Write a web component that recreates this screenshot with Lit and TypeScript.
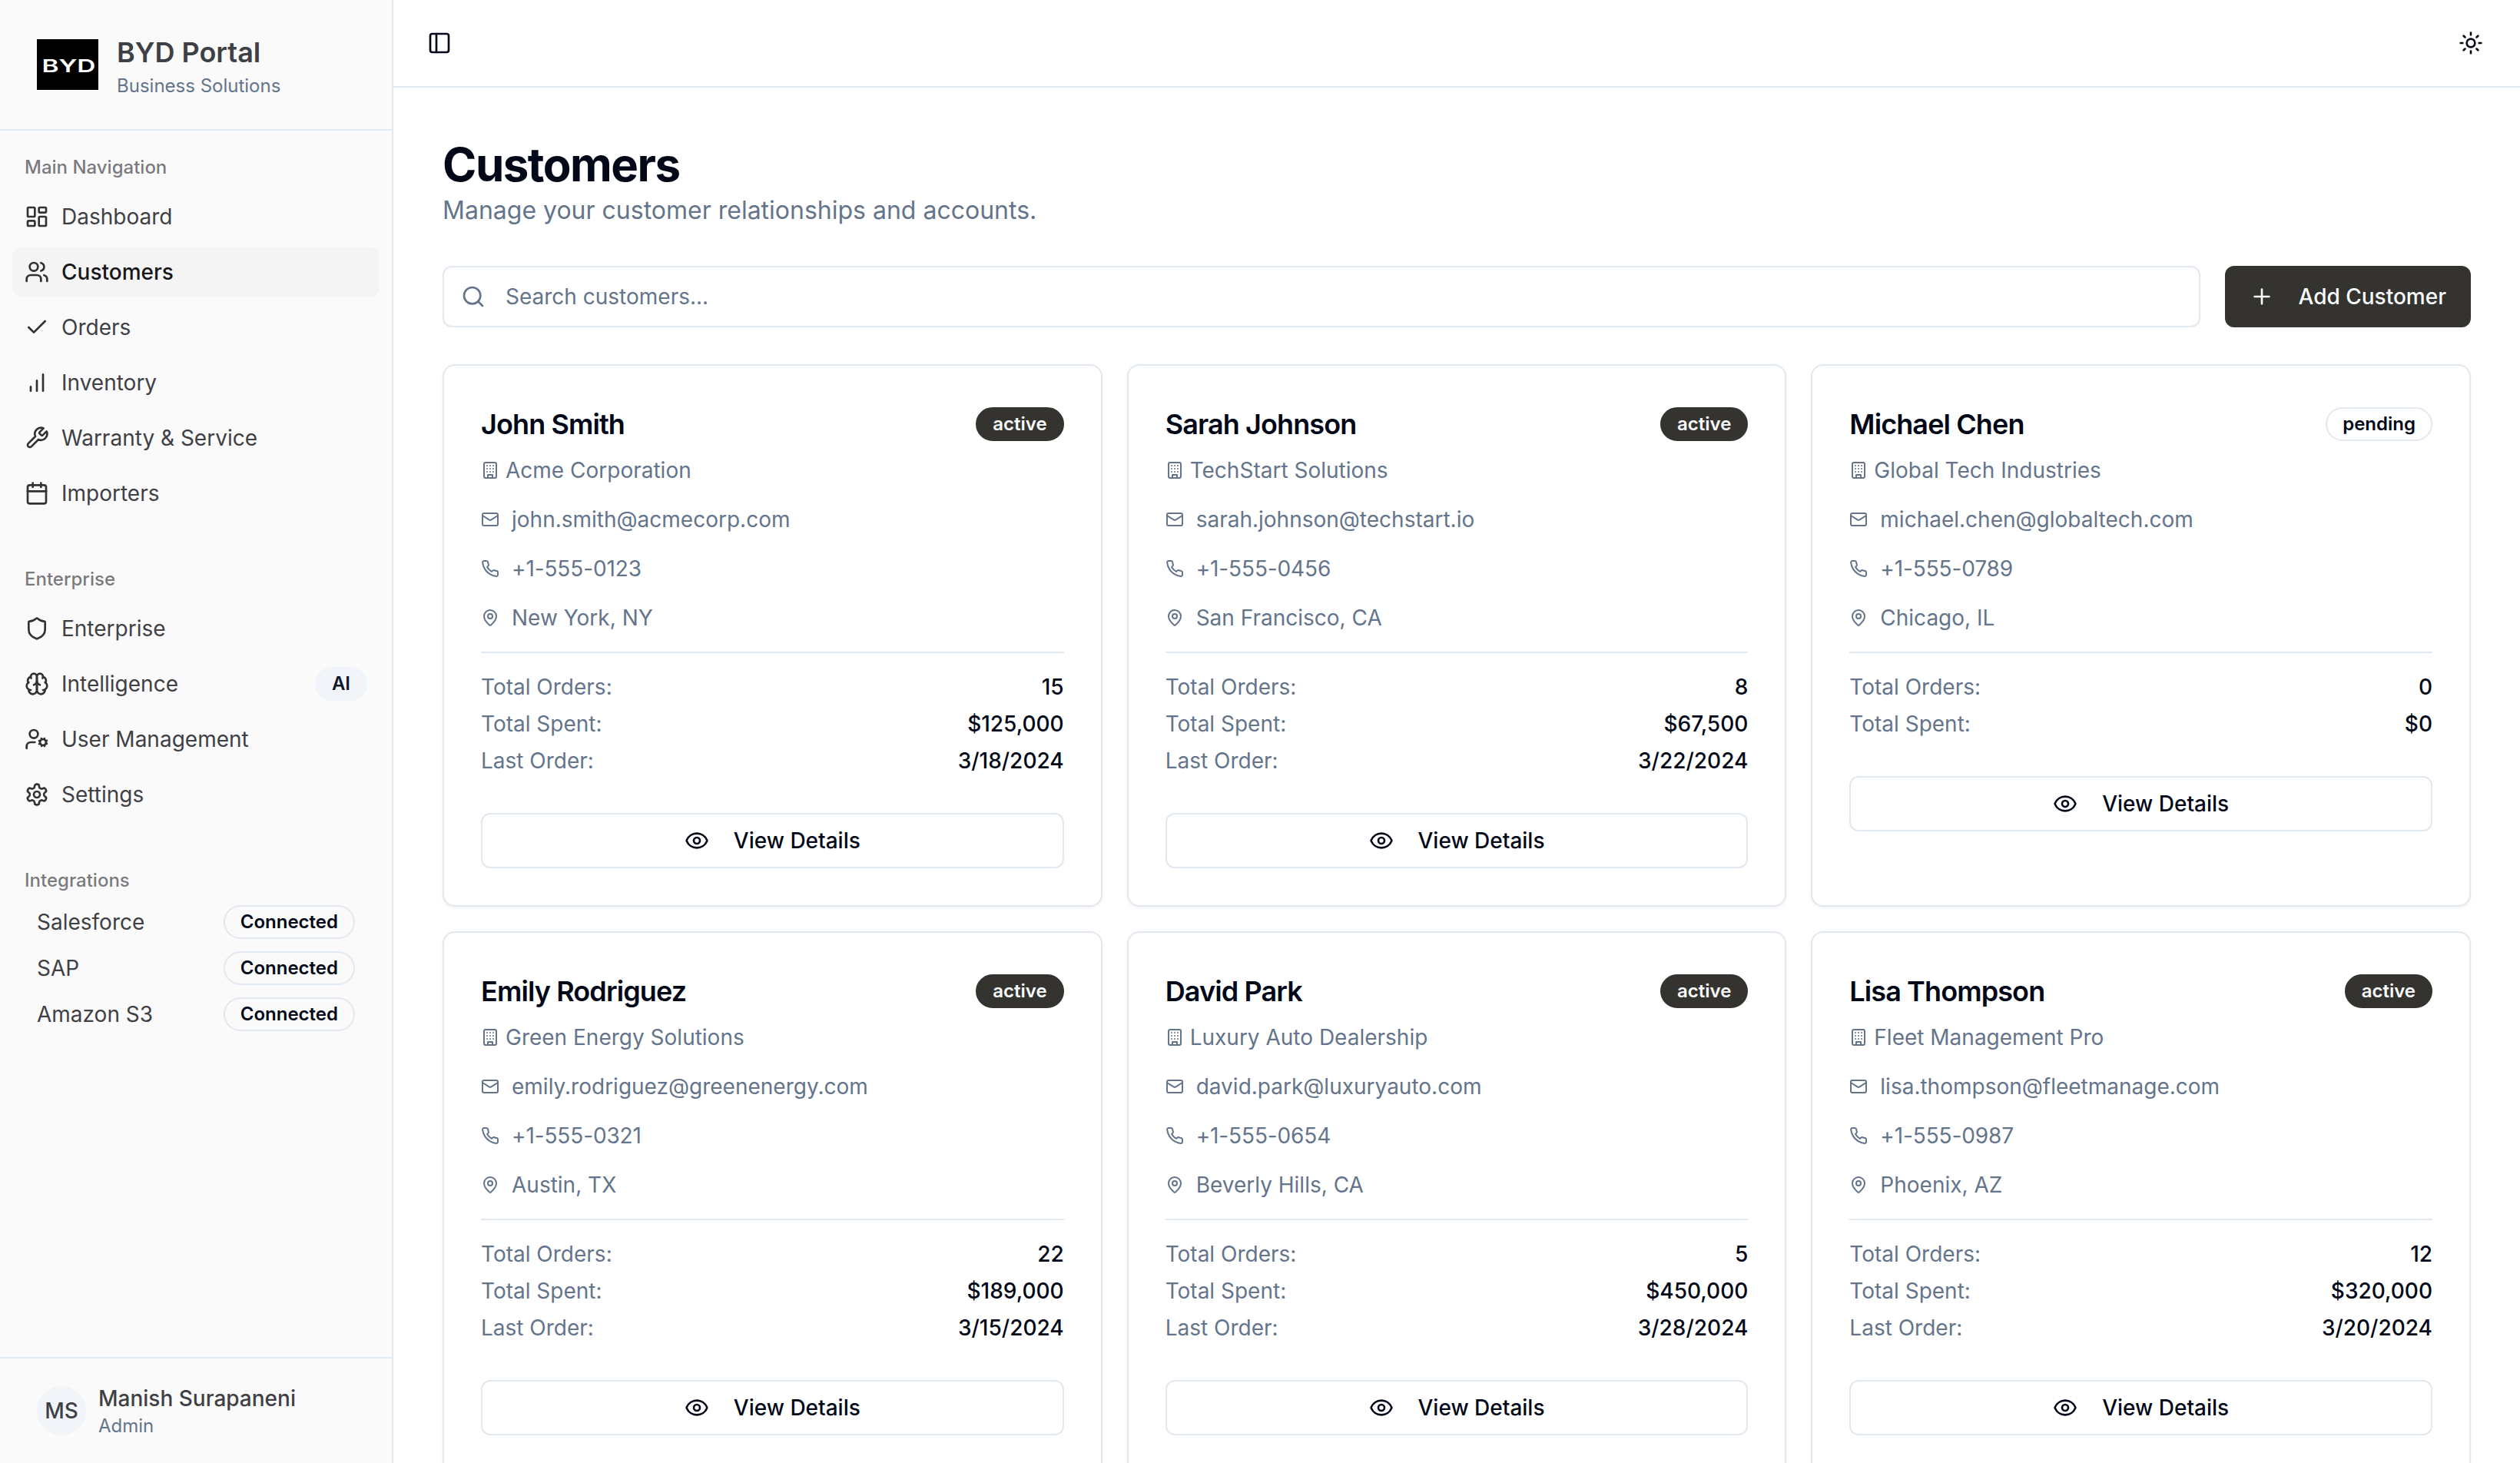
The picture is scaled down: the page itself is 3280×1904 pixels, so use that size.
import { LitElement, html, css, svg, nothing, type SVGTemplateResult } from "lit";
import { customElement, property } from "lit/decorators.js";

const ICONS: Record<string, SVGTemplateResult> = {
  dashboard: svg`<rect width="7" height="9" x="3" y="3" rx="1"/><rect width="7" height="5" x="14" y="3" rx="1"/><rect width="7" height="9" x="14" y="12" rx="1"/><rect width="7" height="5" x="3" y="16" rx="1"/>`,
  users: svg`<path d="M16 21v-2a4 4 0 0 0-4-4H6a4 4 0 0 0-4 4v2"/><circle cx="9" cy="7" r="4"/><path d="M22 21v-2a4 4 0 0 0-3-3.87"/><path d="M16 3.13a4 4 0 0 1 0 7.75"/>`,
  check: svg`<path d="M20 6 9 17l-5-5"/>`,
  chart: svg`<path d="M12 20V10M18 20V4M6 20v-4"/>`,
  wrench: svg`<path d="M14.7 6.3a1 1 0 0 0 0 1.4l1.6 1.6a1 1 0 0 0 1.4 0l3.77-3.77a6 6 0 0 1-7.94 7.94l-6.91 6.91a2.12 2.12 0 0 1-3-3l6.91-6.91a6 6 0 0 1 7.94-7.94l-3.76 3.76z"/>`,
  calendar: svg`<path d="M8 2v4M16 2v4"/><rect width="18" height="18" x="3" y="4" rx="2"/><path d="M3 10h18"/>`,
  shield: svg`<path d="M20 13c0 5-3.5 7.5-7.66 8.95a1 1 0 0 1-.67-.01C7.5 20.5 4 18 4 13V6a1 1 0 0 1 1-1c2 0 4.5-1.2 6.24-2.72a1.17 1.17 0 0 1 1.52 0C14.51 3.81 17 5 19 5a1 1 0 0 1 1 1z"/>`,
  brain: svg`<path d="M12 5a3 3 0 1 0-5.997.125 4 4 0 0 0-2.526 5.77 4 4 0 0 0 .556 6.588A4 4 0 1 0 12 18Z"/><path d="M12 5a3 3 0 1 1 5.997.125 4 4 0 0 1 2.526 5.77 4 4 0 0 1-.556 6.588A4 4 0 1 1 12 18Z"/><path d="M15 13a4.5 4.5 0 0 1-3-4 4.5 4.5 0 0 1-3 4"/><path d="M17.599 6.5a3 3 0 0 0 .399-1.375"/><path d="M6.003 5.125A3 3 0 0 0 6.401 6.5"/><path d="M3.477 10.896a4 4 0 0 1 .585-.396"/><path d="M19.938 10.5a4 4 0 0 1 .585.396"/><path d="M6 18a4 4 0 0 1-1.967-.516"/><path d="M19.967 17.484A4 4 0 0 1 18 18"/>`,
  userCog: svg`<circle cx="18" cy="15" r="3"/><circle cx="9" cy="7" r="4"/><path d="M10 15H6a4 4 0 0 0-4 4v2"/><path d="m21.7 16.4-.9-.3"/><path d="m15.2 13.9-.9-.3"/><path d="m16.6 18.7.3-.9"/><path d="m19.1 12.2.3-.9"/><path d="m19.6 18.7-.4-1"/><path d="m16.8 12.3-.4-1"/><path d="m14.3 16.6 1-.4"/><path d="m20.7 13.8 1-.4"/>`,
  settings: svg`<path d="M12.22 2h-.44a2 2 0 0 0-2 2v.18a2 2 0 0 1-1 1.73l-.43.25a2 2 0 0 1-2 0l-.15-.08a2 2 0 0 0-2.73.73l-.22.38a2 2 0 0 0 .73 2.73l.15.1a2 2 0 0 1 1 1.72v.51a2 2 0 0 1-1 1.74l-.15.09a2 2 0 0 0-.73 2.73l.22.38a2 2 0 0 0 2.73.73l.15-.08a2 2 0 0 1 2 0l.43.25a2 2 0 0 1 1 1.73V20a2 2 0 0 0 2 2h.44a2 2 0 0 0 2-2v-.18a2 2 0 0 1 1-1.73l.43-.25a2 2 0 0 1 2 0l.15.08a2 2 0 0 0 2.73-.73l.22-.39a2 2 0 0 0-.73-2.73l-.15-.08a2 2 0 0 1-1-1.74v-.5a2 2 0 0 1 1-1.74l.15-.09a2 2 0 0 0 .73-2.73l-.22-.38a2 2 0 0 0-2.73-.73l-.15.08a2 2 0 0 1-2 0l-.43-.25a2 2 0 0 1-1-1.73V4a2 2 0 0 0-2-2z"/><circle cx="12" cy="12" r="3"/>`,
  panel: svg`<rect width="18" height="18" x="3" y="3" rx="2"/><path d="M9 3v18"/>`,
  sun: svg`<circle cx="12" cy="12" r="4"/><path d="M12 2v2M12 20v2M4.93 4.93l1.41 1.41M17.66 17.66l1.41 1.41M2 12h2M20 12h2M6.34 17.66l-1.41 1.41M19.07 4.93l-1.41 1.41"/>`,
  search: svg`<circle cx="11" cy="11" r="8"/><path d="m21 21-4.3-4.3"/>`,
  plus: svg`<path d="M5 12h14M12 5v14"/>`,
  building: svg`<rect width="16" height="20" x="4" y="2" rx="2"/><path d="M9 22v-4h6v4M8 6h.01M16 6h.01M12 6h.01M12 10h.01M12 14h.01M16 10h.01M16 14h.01M8 10h.01M8 14h.01"/>`,
  mail: svg`<rect width="20" height="16" x="2" y="4" rx="2"/><path d="m22 7-8.97 5.7a1.94 1.94 0 0 1-2.06 0L2 7"/>`,
  phone: svg`<path d="M22 16.92v3a2 2 0 0 1-2.18 2 19.79 19.79 0 0 1-8.63-3.07 19.5 19.5 0 0 1-6-6 19.79 19.79 0 0 1-3.07-8.67A2 2 0 0 1 4.11 2h3a2 2 0 0 1 2 1.72 12.84 12.84 0 0 0 .7 2.81 2 2 0 0 1-.45 2.11L8.09 9.91a16 16 0 0 0 6 6l1.27-1.27a2 2 0 0 1 2.11-.45 12.84 12.84 0 0 0 2.81.7A2 2 0 0 1 22 16.92z"/>`,
  pin: svg`<path d="M20 10c0 4.993-5.539 10.193-7.399 11.799a1 1 0 0 1-1.202 0C9.539 20.193 4 14.993 4 10a8 8 0 0 1 16 0"/><circle cx="12" cy="10" r="3"/>`,
  eye: svg`<path d="M2.062 12.348a1 1 0 0 1 0-.696 10.75 10.75 0 0 1 19.876 0 1 1 0 0 1 0 .696 10.75 10.75 0 0 1-19.876 0"/><circle cx="12" cy="12" r="3"/>`,
};

const icon = (name: string, size = 32) =>
  html`<svg class="icon" width=${size} height=${size} viewBox="0 0 24 24" fill="none" stroke="currentColor" stroke-width="2" stroke-linecap="round" stroke-linejoin="round">${ICONS[name]}</svg>`;

const base = css`
  * { box-sizing: border-box; }
  .icon { display: block; flex: none; }
  .badge {
    flex: none;
    border: 2px solid #e2e8f0;
    border-radius: 22px;
    padding: 4px 20px;
    font-size: 24px;
    line-height: 32px;
    font-weight: 600;
    color: #020817;
  }
  .badge.active { background: #353330; border-color: #353330; color: #f8fafc; }
  .badge.soft { background: #f1f5f9; border-color: #f1f5f9; color: #0f172a; }
`;

interface Customer {
  name: string;
  status: "active" | "pending";
  company: string;
  email: string;
  phone: string;
  place: string;
  orders: number;
  spent: string;
  last?: string;
}

const CUSTOMERS: Customer[] = [
  { name: "John Smith", status: "active", company: "Acme Corporation", email: "john.smith@acmecorp.com", phone: "+1-555-0123", place: "New York, NY", orders: 15, spent: "$125,000", last: "3/18/2024" },
  { name: "Sarah Johnson", status: "active", company: "TechStart Solutions", email: "sarah.johnson@techstart.io", phone: "+1-555-0456", place: "San Francisco, CA", orders: 8, spent: "$67,500", last: "3/22/2024" },
  { name: "Michael Chen", status: "pending", company: "Global Tech Industries", email: "michael.chen@globaltech.com", phone: "+1-555-0789", place: "Chicago, IL", orders: 0, spent: "$0" },
  { name: "Emily Rodriguez", status: "active", company: "Green Energy Solutions", email: "emily.rodriguez@greenenergy.com", phone: "+1-555-0321", place: "Austin, TX", orders: 22, spent: "$189,000", last: "3/15/2024" },
  { name: "David Park", status: "active", company: "Luxury Auto Dealership", email: "david.park@luxuryauto.com", phone: "+1-555-0654", place: "Beverly Hills, CA", orders: 5, spent: "$450,000", last: "3/28/2024" },
  { name: "Lisa Thompson", status: "active", company: "Fleet Management Pro", email: "lisa.thompson@fleetmanage.com", phone: "+1-555-0987", place: "Phoenix, AZ", orders: 12, spent: "$320,000", last: "3/20/2024" },
];

@customElement("customer-card")
class CustomerCard extends LitElement {
  @property({ attribute: false }) customer!: Customer;

  static styles = [
    base,
    css`
      :host {
        display: block;
        box-sizing: border-box;
        border: 2px solid #e2e8f0;
        border-radius: 16px;
        padding: 48px;
        background: #fff;
        box-shadow: 0 2px 4px rgba(0, 0, 0, 0.05);
      }
      .top { display: flex; align-items: center; justify-content: space-between; }
      .name { font-size: 36px; line-height: 56px; font-weight: 600; letter-spacing: -0.025em; }
      .company { display: flex; align-items: center; gap: 8px; margin-top: 12px; color: #64748b; }
      .contact { display: flex; flex-direction: column; gap: 24px; padding: 24px 0; color: #64748b; }
      .line { display: flex; align-items: center; gap: 16px; }
      .tel { letter-spacing: -0.12px; }
      .stats { display: flex; flex-direction: column; gap: 8px; border-top: 2px solid #e2e8f0; padding-top: 24px; }
      .stat { display: flex; justify-content: space-between; }
      .label { color: #64748b; }
      .value { font-weight: 500; }
      .view {
        display: flex;
        align-items: center;
        justify-content: center;
        gap: 32px;
        height: 72px;
        margin-top: 48px;
        border: 2px solid #e2e8f0;
        border-radius: 12px;
        font-weight: 500;
      }
    `,
  ];

  private stat(label: string, value: string | number) {
    return html`<div class="stat"><span class="label">${label}</span><span class="value">${value}</span></div>`;
  }

  render() {
    const c = this.customer;
    return html`
      <div class="top"><span class="name">${c.name}</span><span class="badge ${c.status}">${c.status}</span></div>
      <div class="company">${icon("building", 24)}<span>${c.company}</span></div>
      <div class="contact">
        <div class="line">${icon("mail", 24)}<span>${c.email}</span></div>
        <div class="line">${icon("phone", 24)}<span class="tel">${c.phone}</span></div>
        <div class="line">${icon("pin", 24)}<span>${c.place}</span></div>
      </div>
      <div class="stats">
        ${this.stat("Total Orders:", c.orders)} ${this.stat("Total Spent:", c.spent)}
        ${c.last ? this.stat("Last Order:", c.last) : nothing}
      </div>
      <div class="view">${icon("eye")}<span>View Details</span></div>
    `;
  }
}

interface NavItem {
  icon: string;
  label: string;
  current?: boolean;
  tag?: string;
}

const MAIN_NAV: NavItem[] = [
  { icon: "dashboard", label: "Dashboard" },
  { icon: "users", label: "Customers", current: true },
  { icon: "check", label: "Orders" },
  { icon: "chart", label: "Inventory" },
  { icon: "wrench", label: "Warranty & Service" },
  { icon: "calendar", label: "Importers" },
];

const ENTERPRISE_NAV: NavItem[] = [
  { icon: "shield", label: "Enterprise" },
  { icon: "brain", label: "Intelligence", tag: "AI" },
  { icon: "userCog", label: "User Management" },
  { icon: "settings", label: "Settings" },
];

@customElement("portal-sidebar")
class PortalSidebar extends LitElement {
  static styles = [
    base,
    css`
      :host {
        display: flex;
        flex-direction: column;
        box-sizing: border-box;
        width: 512px;
        flex: none;
        background: #fafafa;
        border-right: 2px solid #e2e8f0;
        color: #3f3f46;
      }
      .brand { display: flex; align-items: center; gap: 24px; height: 170px; padding: 0 48px; border-bottom: 2px solid #e2e8f0; }
      .logo { display: block; flex: none; }
      .mark { font-family: Inter, "Liberation Sans", sans-serif; font-size: 23.5px; font-weight: 600; fill: #fff; }
      .title { font-size: 36px; line-height: 56px; font-weight: 600; }
      .sub { font-size: 24px; line-height: 32px; color: #64748b; }
      .groups { flex: 1; display: flex; flex-direction: column; gap: 16px; }
      .group { padding: 16px; }
      .heading { display: flex; align-items: center; height: 64px; padding: 0 16px; font-size: 24px; font-weight: 500; color: rgba(63, 63, 70, 0.7); }
      .items { display: flex; flex-direction: column; gap: 8px; }
      .item { display: flex; align-items: center; gap: 16px; height: 64px; padding: 0 16px; border-radius: 12px; }
      .item .icon { color: #333230; }
      .item.current { background: #f4f4f5; color: #18181b; font-weight: 500; }
      .item .badge { margin-left: auto; }
      .links { display: flex; flex-direction: column; gap: 16px; padding: 0 32px; }
      .link { display: flex; align-items: center; justify-content: space-between; height: 44px; }
      .user { display: flex; align-items: center; gap: 16px; height: 138px; padding: 0 48px; border-top: 2px solid #e2e8f0; }
      .avatar { display: flex; align-items: center; justify-content: center; width: 64px; height: 64px; border-radius: 50%; background: #f1f5f9; font-weight: 500; }
      .person { font-weight: 500; }
    `,
  ];

  private item(n: NavItem) {
    return html`<div class="item ${n.current ? "current" : ""}">
      ${icon(n.icon)}<span>${n.label}</span>${n.tag ? html`<span class="badge soft">${n.tag}</span>` : nothing}
    </div>`;
  }

  render() {
    return html`
      <div class="brand">
        <svg class="logo" width="80" height="66" viewBox="0 0 80 66">
          <rect width="80" height="66" fill="#000" />
          <text class="mark" x="6.5" y="43" textLength="70" lengthAdjust="spacingAndGlyphs">BYD</text>
        </svg>
        <div><div class="title">BYD Portal</div><div class="sub">Business Solutions</div></div>
      </div>
      <div class="groups">
        <div class="group"><div class="heading">Main Navigation</div><div class="items">${MAIN_NAV.map((n) => this.item(n))}</div></div>
        <div class="group"><div class="heading">Enterprise</div><div class="items">${ENTERPRISE_NAV.map((n) => this.item(n))}</div></div>
        <div class="group">
          <div class="heading">Integrations</div>
          <div class="links">
            ${["Salesforce", "SAP", "Amazon S3"].map(
              (s) => html`<div class="link"><span>${s}</span><span class="badge">Connected</span></div>`,
            )}
          </div>
        </div>
      </div>
      <div class="user">
        <div class="avatar">MS</div>
        <div><div class="person">Manish Surapaneni</div><div class="sub">Admin</div></div>
      </div>
    `;
  }
}

@customElement("app-root")
class AppRoot extends LitElement {
  static styles = [
    base,
    css`
      :host {
        display: flex;
        height: 1904px;
        overflow: hidden;
        background: #fff;
        color: #020817;
        font: 400 28px/40px Inter, "Liberation Sans", sans-serif;
        -webkit-font-smoothing: antialiased;
      }
      .main { flex: 1; min-width: 0; display: flex; flex-direction: column; }
      .bar { display: flex; align-items: center; justify-content: space-between; flex: none; height: 114px; padding: 0 48px 0 44px; border-bottom: 2px solid #e2e8f0; }
      .page { flex: 1; min-height: 0; overflow: hidden; padding: 64px 64px 0; }
      .h1 { margin: 0; font-size: 60px; line-height: 72px; font-weight: 700; letter-spacing: -0.025em; }
      .lead { font-size: 32px; line-height: 48px; color: #64748b; }
      .tools { display: flex; gap: 32px; margin: 48px 0; }
      .search { flex: 1; display: flex; align-items: center; gap: 26px; height: 80px; padding: 0 22px; border: 2px solid #e2e8f0; border-radius: 12px; color: #64748b; }
      .add { display: flex; align-items: center; gap: 32px; height: 80px; padding: 0 32px; border-radius: 12px; background: #353330; color: #f8fafc; font-weight: 500; }
      .grid { display: grid; grid-template-columns: repeat(3, minmax(0, 1fr)); gap: 32px; }
    `,
  ];

  render() {
    return html`
      <portal-sidebar></portal-sidebar>
      <div class="main">
        <div class="bar">${icon("panel")}${icon("sun")}</div>
        <div class="page">
          <h1 class="h1">Customers</h1>
          <div class="lead">Manage your customer relationships and accounts.</div>
          <div class="tools">
            <div class="search">${icon("search")}<span>Search customers...</span></div>
            <div class="add">${icon("plus")}<span>Add Customer</span></div>
          </div>
          <div class="grid">${CUSTOMERS.map((c) => html`<customer-card .customer=${c}></customer-card>`)}</div>
        </div>
      </div>
    `;
  }
}
